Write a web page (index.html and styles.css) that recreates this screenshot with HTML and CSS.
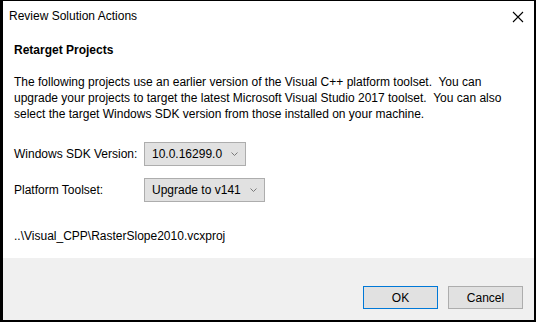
FILE: index.html
```html
<!DOCTYPE html>
<html lang="en">
<head>
    <meta charset="UTF-8">
    <title>Review Solution Actions</title>
    <link rel="stylesheet" href="styles.css">
</head>
<body>
    <div class="dialog">
        <div class="titlebar">
            <span class="title">Review Solution Actions</span>
            <svg class="close" width="12" height="12" viewBox="0 0 12 12">
                <path d="M1 1 L11 11 M11 1 L1 11" stroke="#000" stroke-width="1.1" fill="none"/>
            </svg>
        </div>

        <div class="content">
            <h1 class="heading">Retarget Projects</h1>
            <p class="intro">The following projects use an earlier version of the Visual C++ platform toolset.&nbsp; You can upgrade your projects to target the latest Microsoft Visual Studio 2017 toolset.&nbsp; You can also select the target Windows SDK version from those installed on your machine.</p>

            <div class="field">
                <span class="label">Windows SDK Version:</span>
                <div class="combo">
                    <span>10.0.16299.0</span>
                    <svg class="chev" width="7" height="4" viewBox="0 0 7 4"><path d="M0.5 0.5 L3.5 3.5 L6.5 0.5" stroke="#7a7a7a" fill="none"/></svg>
                </div>
            </div>
            <div class="field">
                <span class="label">Platform Toolset:</span>
                <div class="combo">
                    <span>Upgrade to v141</span>
                    <svg class="chev" width="7" height="4" viewBox="0 0 7 4"><path d="M0.5 0.5 L3.5 3.5 L6.5 0.5" stroke="#7a7a7a" fill="none"/></svg>
                </div>
            </div>

            <div class="path">..\Visual_CPP\RasterSlope2010.vcxproj</div>
        </div>

        <div class="footer">
            <button class="btn btn-default">OK</button>
            <button class="btn">Cancel</button>
        </div>
    </div>
</body>
</html>
```

FILE: styles.css
```css
html, body {
    margin: 0;
    padding: 0;
}

body {
    font-family: 'Liberation Sans', Arial, sans-serif;
    font-size: 12px;
    color: #000;
    background: #fff;
}

.dialog {
    width: 536px;
    height: 322px;
    box-sizing: border-box;
    border: 2px solid #000;
    border-top-width: 1px;
    border-left-width: 3px;
    display: flex;
    flex-direction: column;
    background: #fff;
}

.titlebar {
    height: 30px;
    display: flex;
    align-items: center;
    justify-content: space-between;
    padding: 0 10px 0 6px;
}

.close {
    margin-top: 1px;
}

.content {
    flex: 1;
    padding: 0 11px;
}

.heading {
    font-size: 12px;
    font-weight: bold;
    margin: 12px 0 0;
}

.intro {
    margin: 17px 0 0;
    line-height: 16px;
    width: 500px;
}

.field {
    display: flex;
    align-items: center;
    margin-top: 20px;
}

.field + .field {
    margin-top: 12px;
}

.label {
    width: 130px;
}

.combo {
    height: 24px;
    box-sizing: border-box;
    border: 1px solid #adadad;
    background: #e1e1e1;
    display: flex;
    align-items: center;
    gap: 9px;
    padding: 0 7px 0 7px;
}

.path {
    margin-top: 27px;
}

.footer {
    height: 62px;
    background: #f0f0f0;
    display: flex;
    justify-content: flex-end;
    align-items: flex-end;
    gap: 10px;
    padding: 0 11px 11px 0;
    box-sizing: border-box;
}

.btn {
    width: 75px;
    height: 23px;
    font-family: inherit;
    font-size: 12px;
    background: #e1e1e1;
    border: 1px solid #adadad;
    padding: 0;
    margin: 0;
}

.btn-default {
    border-color: #0078d7;
}
```
